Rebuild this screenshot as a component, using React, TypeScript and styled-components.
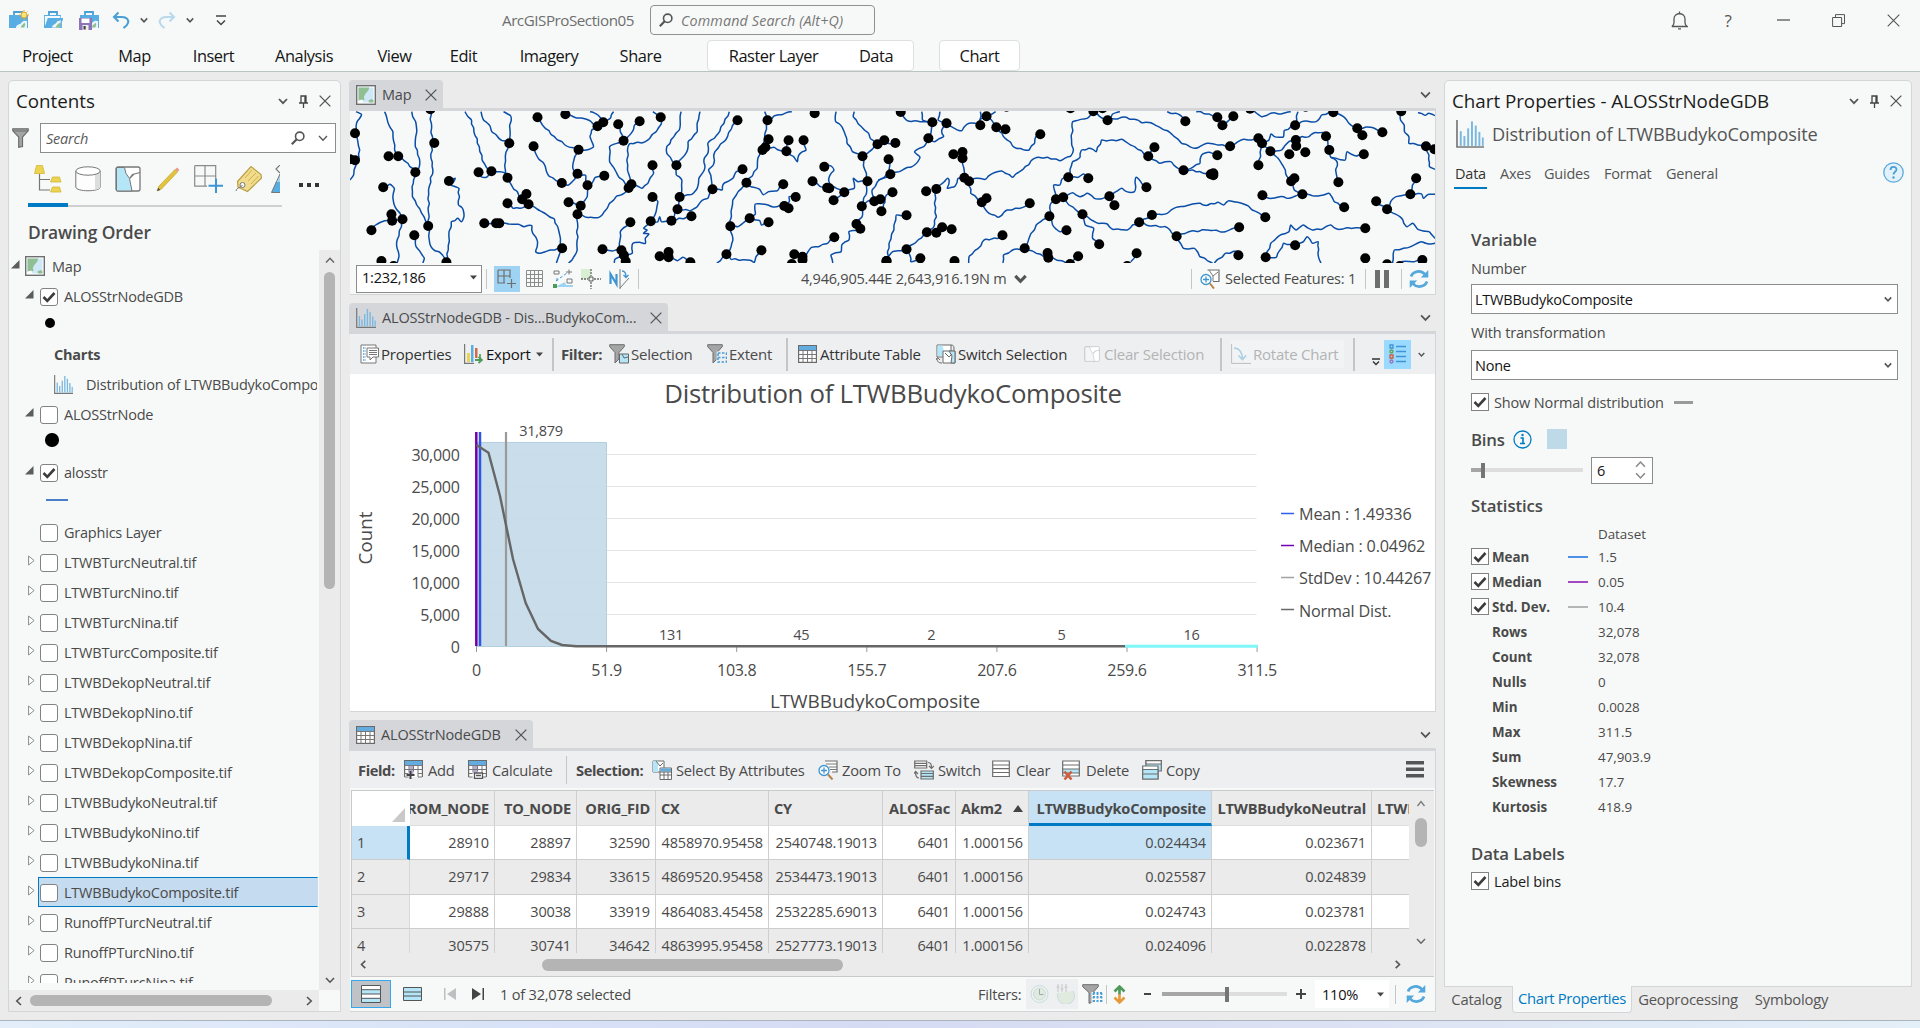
import React from "react";
import styled, { createGlobalStyle, css } from "styled-components";

const GlobalStyle = createGlobalStyle`
  * { box-sizing: border-box; }
  html, body { margin: 0; padding: 0; overflow: hidden; }
  body {
    font-family: "Open Sans", "Noto Sans", sans-serif;
    font-size: 14.5px;
    letter-spacing: -0.22px;
    color: #4a4a4a;
    background: #ebebeb;
  }
  svg { display: block; flex: none; }
`;

/* ---------- shell ---------- */

const Window = styled.div`
  width: 1920px;
  height: 1028px;
  display: flex;
  flex-direction: column;
  background: #ebebeb;
  overflow: hidden;
  white-space: nowrap;
`;

const Gap = styled.span<{ $w: number }>`
  width: ${(p) => p.$w}px;
  flex: none;
`;

const TitleBar = styled.header`
  height: 40px;
  display: flex;
  align-items: center;
  background: #f7f9f8;
`;

const QuickAccess = styled.div`
  display: flex;
  align-items: center;
  width: 502px;
  padding-left: 8px;
`;

const ProjectName = styled.div`
  width: 148px;
  font-size: 15.2px;
  color: #6e6e6e;
  letter-spacing: -0.47px;
`;

const CommandSearch = styled.div`
  width: 225px;
  height: 30px;
  display: flex;
  align-items: center;
  gap: 8px;
  padding-left: 8px;
  border: 1px solid #8e9190;
  border-radius: 4px;
  font-style: italic;
  font-size: 14.3px;
  color: #777;
  letter-spacing: 0.14px;
`;

const WindowButtons = styled.div`
  display: flex;
  align-items: center;
  margin-left: auto;
`;

const ButtonCell = styled.div<{ $w: number }>`
  width: ${(p) => p.$w}px;
  display: flex;
  justify-content: center;
  font-size: 17px;
  color: #555;
`;

const RibbonTabs = styled.nav`
  height: 32px;
  display: flex;
  background: #f7f9f8;
  border-bottom: 1px solid #b9c3bf;
`;

const RibbonTab = styled.div<{ $w: number }>`
  width: ${(p) => p.$w}px;
  height: 30px;
  display: flex;
  align-items: center;
  justify-content: center;
  padding-top: 1px;
  font-size: 16.4px;
  letter-spacing: -0.45px;
  color: #151515;
`;

const ContextGroup = styled.div<{ $gap: number }>`
  display: flex;
  margin-left: ${(p) => p.$gap}px;
  height: 31px;
  background: #fff;
  border: 1px solid #dedfe0;
  border-radius: 4px;
  ${RibbonTab} { height: 28px; }
`;

const Workspace = styled.main`
  flex: 1;
  min-height: 0;
  display: flex;
  align-items: flex-start;
  padding: 8px 8px 0;
`;

const TaskStrip = styled.footer`
  height: 8px;
  border-top: 1px solid #a9b4bd;
  background: linear-gradient(90deg, #e3eefa 0, #d9e3f8 25%, #d5dbf3 45%, #dbe0f3 65%, #dfe7f5 80%, #e3eff9 100%);
`;

const Panel = styled.section<{ $w: number; $h: number }>`
  width: ${(p) => p.$w}px;
  height: ${(p) => p.$h}px;
  display: flex;
  flex-direction: column;
  background: #f7f9f8;
  border: 1px solid #d3d5d9;
  border-radius: 5px 5px 0 0;
  overflow: hidden;
`;

const PanelHeader = styled.div`
  height: 42px;
  flex: none;
  display: flex;
  align-items: center;
  padding: 0 9px 2px 7px;
  font-size: 18.8px;
  letter-spacing: -0.02px;
  color: #1c1c1c;
`;

const PanelButtons = styled.div`
  margin-left: auto;
  display: flex;
  align-items: center;
  gap: 10px;
`;

/* ---------- contents ---------- */

const SearchRow = styled.div`
  display: flex;
  align-items: center;
  padding: 0 4px 0 3px;
  gap: 11px;
`;

const SearchBox = styled.div`
  flex: 1;
  height: 30px;
  display: flex;
  align-items: center;
  padding: 0 7px 0 5px;
  background: #fff;
  border: 1px solid #8c8c8c;
  font-style: italic;
  color: #5a5a5a;
  & > :first-child { flex: 1; }
`;

const ListModes = styled.div`
  display: flex;
  margin: 6px 0 0 19px;
  height: 48px;
`;

const ModeStrip = styled.div`
  width: 254px;
  display: flex;
  border-bottom: 2px solid #cfd0d0;
`;

const Mode = styled.div<{ $w: number; $active?: boolean }>`
  width: ${(p) => p.$w}px;
  height: 48px;
  flex: none;
  display: flex;
  align-items: center;
  justify-content: center;
  padding-bottom: 4px;
  border-bottom: 4px solid ${(p) => (p.$active ? "#007ac2" : "transparent")};
`;

const MoreDots = styled.div`
  display: flex;
  gap: 4px;
  align-items: center;
  margin-left: 17px;
  padding-top: 4px;
  i { width: 4px; height: 4px; background: #333; }
`;

const SectionTitle = styled.h2<{ $h: number; $pad?: number; $top?: number; $size?: number }>`
  margin: ${(p) => p.$top ?? 0}px 0 0;
  height: ${(p) => p.$h}px;
  flex: none;
  display: flex;
  align-items: center;
  padding-left: ${(p) => p.$pad ?? 0}px;
  font-size: ${(p) => p.$size ?? 16.8}px;
  font-weight: 600;
  letter-spacing: -0.1px;
`;

const TreeArea = styled.div`
  height: 740px;
  display: flex;
`;

const Tree = styled.div`
  width: 310px;
  height: 733px;
  overflow: hidden;
  padding-top: 1px;
`;

const TreeRow = styled.div<{ $h?: number; $pad: number; $top?: number }>`
  height: ${(p) => p.$h ?? 30}px;
  margin-top: ${(p) => p.$top ?? 0}px;
  padding-left: ${(p) => p.$pad}px;
  display: flex;
  align-items: center;
  overflow: hidden;
`;

const RowBody = styled.div<{ $selected?: boolean; $indent?: number }>`
  flex: 1;
  height: 30px;
  margin-right: 1px;
  display: flex;
  align-items: center;
  gap: 6px;
  padding-left: ${(p) => p.$indent ?? 1}px;
  border: 1px solid transparent;
  overflow: hidden;
  ${(p) => p.$selected && css`
    background: #c5dbef;
    border-color: #007ac2;
    border-right-color: #c5dbef;
  `}
`;

const Toggle = styled.div<{ $w: number }>`
  width: ${(p) => p.$w}px;
  display: flex;
  padding-bottom: 3px;
`;

const CheckBox = styled.span<{ $square?: boolean }>`
  width: 18px;
  height: 18px;
  flex: none;
  margin-top: 2px;
  display: flex;
  align-items: center;
  justify-content: center;
  background: #fff;
  border: 1px solid #828282;
  border-radius: ${(p) => (p.$square ? 0 : 3)}px;
`;

const Dot = styled.span<{ $size: number }>`
  width: ${(p) => p.$size}px;
  height: ${(p) => p.$size}px;
  border-radius: 50%;
  background: #000;
`;

const LineSample = styled.span<{ $color: string; $w: number; $h?: number }>`
  width: ${(p) => p.$w}px;
  height: ${(p) => p.$h ?? 2}px;
  flex: none;
  background: ${(p) => p.$color};
`;

const VScroll = styled.div<{ $w: number }>`
  width: ${(p) => p.$w}px;
  height: 100%;
  flex: none;
  display: flex;
  flex-direction: column;
  align-items: center;
  background: #ebebeb;
`;

const HScroll = styled.div<{ $w: number; $h: number; $pad?: string }>`
  width: ${(p) => p.$w}px;
  height: ${(p) => p.$h}px;
  display: flex;
  align-items: center;
  padding: ${(p) => p.$pad ?? "0"};
  background: #ebebeb;
`;

const Thumb = styled.span<{ $w: number; $h: number; $m?: string }>`
  width: ${(p) => p.$w}px;
  height: ${(p) => p.$h}px;
  margin: ${(p) => p.$m ?? "0"};
  flex: none;
  border-radius: 6px;
  background: #b4b4b4;
`;

const Spacer = styled.span`
  flex: 1;
`;

/* ---------- centre ---------- */

const Center = styled.div`
  width: 1087px;
  margin: 0 8px 0 8px;
  display: flex;
  flex-direction: column;
`;

const DocTabs = styled.div<{ $top?: number }>`
  height: 31px;
  margin-top: ${(p) => p.$top ?? 0}px;
  flex: none;
  display: flex;
  align-items: flex-start;
  border-bottom: 3px solid #d4d6da;
`;

const DocTab = styled.div<{ $w: number }>`
  width: ${(p) => p.$w}px;
  height: 28px;
  display: flex;
  align-items: center;
  padding: 1px 6px 0 7px;
  gap: 6px;
  background: #d4d6da;
  border-radius: 4px 4px 0 0;
  letter-spacing: -0.17px;
  & > :last-child { margin-left: auto; }
`;

const DocChevron = styled.div`
  margin-left: auto;
  padding: 9px 5px 0 0;
`;

const DocBody = styled.div<{ $h: number; $plain?: boolean }>`
  height: ${(p) => p.$h}px;
  flex: none;
  display: flex;
  flex-direction: column;
  margin-left: 1px;
  background: ${(p) => (p.$plain ? "#f7f9f8" : "#fff")};
  border-right: 1px solid #d3d5d9;
  border-bottom: 1px solid #d3d5d9;
  overflow: hidden;
`;

const Bar = styled.div<{ $h: number; $tone?: string; $size?: number; $left?: number }>`
  height: ${(p) => p.$h}px;
  flex: none;
  display: flex;
  align-items: center;
  padding-left: ${(p) => p.$left ?? 0}px;
  font-size: ${(p) => p.$size ?? 14.6}px;
  background: ${(p) => p.$tone ?? "#f7f9f8"};
`;

const Slot = styled.div<{ $w: number; $icon?: number; $bold?: boolean; $color?: string; $tint?: string; $h?: number }>`
  width: ${(p) => p.$w}px;
  height: ${(p) => p.$h ?? 28}px;
  flex: none;
  display: flex;
  align-items: center;
  font-weight: ${(p) => (p.$bold ? 700 : 400)};
  ${(p) => p.$bold && css`letter-spacing: -0.4px;`}
  color: ${(p) => p.$color ?? "inherit"};
  background: ${(p) => p.$tint ?? "transparent"};
  & > svg { margin-right: ${(p) => p.$icon ?? 0}px; }
`;

const Centered = styled(Slot)`
  justify-content: center;
  & > svg { margin-right: 0; }
`;

const Divider = styled.span<{ $l: number; $r: number; $h?: number; $w?: number }>`
  width: ${(p) => p.$w ?? 1}px;
  height: ${(p) => p.$h ?? 20}px;
  flex: none;
  margin: 0 ${(p) => p.$r}px 0 ${(p) => p.$l}px;
  background: #c3c5c7;
`;

const ScaleBox = styled.div`
  width: 126px;
  height: 28px;
  margin-left: 6px;
  display: flex;
  align-items: center;
  justify-content: space-between;
  padding: 0 4px 2px 5px;
  background: #fff;
  border: 1px solid #8c8c8c;
  color: #111;
`;

const TableFrame = styled.div`
  width: 1083px;
  height: 187px;
  margin: 2px 0 0 1px;
  display: flex;
  flex-direction: column;
  border: solid #c9c9c9;
  border-width: 1px 0 1px 1px;
  background: #ebebeb;
`;

const TableMain = styled.div`
  height: 162px;
  display: flex;
`;

const Grid = styled.div`
  width: 1057px;
  height: 162px;
  overflow: hidden;
`;

const GridRow = styled.div<{ $head?: boolean; $odd?: boolean }>`
  display: grid;
  grid-template-columns: 58px 85px 82px 79px 113px 114px 73px 73px 183px 160px 90px;
  height: ${(p) => (p.$head ? 35 : 34.3)}px;
  background: ${(p) => (p.$odd ? "#fff" : "#ebebeb")};
`;

const Cell = styled.div<{ $left?: boolean; $hot?: boolean; $head?: boolean }>`
  display: flex;
  align-items: center;
  justify-content: ${(p) => (p.$left ? "flex-start" : "flex-end")};
  overflow: hidden;
  padding: 0 5px 0 5px;
  border-right: 1px solid #cfcfcf;
  border-bottom: 1px solid #cdcdcd;
  letter-spacing: -0.14px;
  ${(p) => p.$head && css`
    font-weight: 700;
    font-size: 14.6px;
    letter-spacing: -0.2px;
    border-bottom-color: #dedede;
  `}
  ${(p) => p.$hot && css`background: #c7e2f5;`}
  ${(p) => p.$hot && p.$head && css`border-bottom: 3px solid #007ac2; padding-top: 2px;`}
`;

const RowHead = styled.div<{ $current?: boolean }>`
  display: flex;
  align-items: center;
  padding-left: 5px;
  border-bottom: 1px solid #cdcdcd;
  border-right: ${(p) => (p.$current ? "3px solid #007ac2" : "1px solid #d8d8d8")};
  background: ${(p) => (p.$current ? "#c7e2f5" : "#ebebeb")};
`;

const Corner = styled.div`
  display: flex;
  align-items: flex-end;
  justify-content: flex-end;
  padding: 0 5px 4px;
  background: #fff;
`;

const ViewToggle = styled.div`
  width: 40px;
  height: 28px;
  display: flex;
  align-items: center;
  justify-content: center;
  background: #bfc2c7;
  border: 1px solid #35a7ea;
`;

const Track = styled.div<{ $w: number; $pos: number }>`
  width: ${(p) => p.$w}px;
  height: 15px;
  flex: none;
  display: flex;
  align-items: center;
  & > :first-child { width: ${(p) => p.$pos}px; height: 4px; background: #a6a6a6; }
  & > :nth-child(2) { width: 4px; height: 15px; background: #757575; }
  & > :last-child { flex: 1; height: 4px; background: #dedede; }
`;

/* ---------- chart properties ---------- */

const RightColumn = styled.div`
  width: 468px;
  display: flex;
  flex-direction: column;
`;

const ChartName = styled.div`
  height: 32px;
  display: flex;
  align-items: center;
  padding-left: 11px;
  margin-top: -5px;
  gap: 8px;
  font-size: 18.2px;
  letter-spacing: -0.12px;
  color: #555;
`;

const PropTabs = styled.div`
  height: 40px;
  margin-top: 8px;
  display: flex;
  align-items: flex-start;
  padding: 4px 7px 0 9px;
  & > svg { margin-left: auto; }
`;

const PropTab = styled.div<{ $w: number; $active?: boolean }>`
  width: ${(p) => p.$w}px;
  height: 28px;
  span {
    display: inline-block;
    height: 27px;
    padding: 2px 1px 0;
    color: ${(p) => (p.$active ? "#333" : "#555")};
    border-bottom: ${(p) => (p.$active ? "2px solid #007ac2" : "none")};
  }
`;

const Form = styled.div`
  padding: 0 13px 0 26px;
  margin-top: 28px;
  display: flex;
  flex-direction: column;
`;

const FieldLabel = styled.label<{ $h: number }>`
  height: ${(p) => p.$h}px;
  display: flex;
  align-items: center;
  letter-spacing: -0.15px;
`;

const Select = styled.div`
  height: 30px;
  display: flex;
  align-items: center;
  justify-content: space-between;
  padding: 0 5px 0 3px;
  background: #fff;
  border: 1px solid #8c8c8c;
  color: #151515;
`;

const CheckRow = styled.div<{ $h: number; $dark?: boolean }>`
  height: ${(p) => p.$h}px;
  display: flex;
  align-items: center;
  gap: 5px;
  color: ${(p) => (p.$dark ? "#1a1a1a" : "inherit")};
  letter-spacing: -0.15px;
  ${CheckBox} { margin-top: 0; }
`;

const BinsRow = styled.div`
  height: 30px;
  display: flex;
  align-items: center;
  font-size: 16.8px;
  font-weight: 600;
  span { width: 42px; }
`;

const Swatch = styled.i`
  width: 20px;
  height: 20px;
  margin-left: 15px;
  background: #bed9e8;
`;

const SliderRow = styled.div`
  height: 32px;
  display: flex;
  align-items: center;
  gap: 8px;
`;

const Spinner = styled.div`
  width: 62px;
  height: 27px;
  display: flex;
  align-items: center;
  justify-content: space-between;
  padding: 0 6px 0 5px;
  background: #fff;
  border: 1px solid #8c8c8c;
  color: #151515;
`;

const StatRow = styled.div<{ $h?: number }>`
  height: ${(p) => p.$h ?? 25}px;
  display: grid;
  grid-template-columns: 21px 76px 30px 1fr;
  align-items: center;
  font-size: 13.4px;
  letter-spacing: -0.02px;
  ${CheckBox} { margin-top: 0; height: 17px; }
  b { font-weight: 700; }
`;

const BottomTabs = styled.div`
  height: 26px;
  display: flex;
  align-items: stretch;
`;

const BottomTab = styled.div<{ $w: number; $active?: boolean }>`
  width: ${(p) => p.$w}px;
  display: flex;
  justify-content: center;
  align-items: center;
  padding: 0 3px 2px 0;
  font-size: 14.8px;
  letter-spacing: -0.2px;
  color: #555;
  ${(p) => p.$active && css`
    color: #007ac2;
    letter-spacing: -0.35px;
    padding-right: 0;
    background: #f7f9f8;
    border: 1px solid #d3d5d9;
    border-top: none;
    border-radius: 0 0 4px 4px;
    margin-top: -1px;
  `}
`;

/* ---------- icons ---------- */

const Chevron = ({ s = 9, w = 1.8, c = "#555", dir = 0 }: { s?: number; w?: number; c?: string; dir?: number }) => (
  <svg width={s} height={s} viewBox="0 0 10 10" fill="none" stroke={c} strokeWidth={w}>
    <path d="M1 3l4 4.2L9 3" transform={`rotate(${dir} 5 5)`} />
  </svg>
);

const Close = ({ s = 13, w = 1.4, c = "#555" }: { s?: number; w?: number; c?: string }) => (
  <svg width={s} height={s} viewBox="0 0 13 13" stroke={c} strokeWidth={w}><path d="M.7.7l11.6 11.6M12.3.7L.7 12.3" /></svg>
);

const Pin = () => (
  <svg width="11" height="13" viewBox="0 0 11 13" fill="none" stroke="#444" strokeWidth="1.3">
    <path d="M3 8V1h5v7M1 8h9M5.500 8v5M7 1v7" />
  </svg>
);

const Caret = () => (
  <svg width="7" height="5" viewBox="0 0 7 5"><path d="M0 .5h7L3.500 4.500z" fill="#444" /></svg>
);

const Magnifier = ({ s = 14 }: { s?: number }) => (
  <svg width={s} height={s} viewBox="0 0 14 14" fill="none" stroke="#555">
    <circle cx="8.700" cy="5.300" r="4.200" strokeWidth="1.600" /><path d="M5.700 8.300L.8 13.200" strokeWidth="2.200" />
  </svg>
);

const Check = () => (
  <svg width="14" height="12" viewBox="0 0 14 12" fill="none" stroke="#3c3c3c" strokeWidth="2.600"><path d="M1.500 6l3.800 3.800L12.500 2" /></svg>
);

const MapIcon = ({ s = 19 }: { s?: number }) => (
  <svg width={s} height={s} viewBox="0 0 20 20">
    <rect x=".7" y=".7" width="18.600" height="18.600" fill="#fff" stroke="#6f6f6f" strokeWidth="1.400" />
    <path d="M2.500 2.500h15v15h-15z" fill="#cfe8f7" />
    <path d="M2.500 2.500h10.800l-1 3-3 3.500-1.500 3 .8 2.500-3 2-3.100-.8z" fill="#8fbf93" />
    <path d="M2.500 15.500l4-1 1 3h-5z" fill="#fff" /><path d="M12.500 15.500l3-1.500 2 1.200v2.300h-4.500z" fill="#8fbf93" />
  </svg>
);

const Histogram = ({ s = 20 }: { s?: number }) => (
  <svg width={s} height={s} viewBox="0 0 20 20">
    <path d="M.7 0v19.300H20" fill="none" stroke="#777" strokeWidth="1.200" />
    <g fill="#7ab8e0">
      <rect x="2.700" y="8" width="1.400" height="10.500" /><rect x="5.300" y="11.500" width="1.400" height="7" />
      <rect x="8" y="6" width="1.400" height="12.500" /><rect x="10.700" y="1" width="1.400" height="17.500" />
      <rect x="13.400" y="4" width="1.400" height="14.500" /><rect x="16" y="8.500" width="1.400" height="10" />
      <rect x="18.500" y="12.500" width="1.300" height="6" />
    </g>
  </svg>
);

const Funnel = ({ w = 17, h = 20 }: { w?: number; h?: number }) => (
  <svg width={w} height={h} viewBox="0 0 17 20">
    <path d="M.8.8h15.400v2L10.500 9v9.500L6.700 19.200V9L.8 2.800z" fill="#a5a5a5" stroke="#6c6c6c" strokeWidth="1.200" />
    <path d="M1 3h15" stroke="#6c6c6c" strokeWidth="1" />
  </svg>
);

const TableIcon = ({ head = "#62ace0", w = 19 }: { head?: string; w?: number }) => (
  <svg width={w} height="18" viewBox="0 0 19 18">
    <rect x=".6" y=".6" width="17.800" height="16.800" fill="#fff" stroke="#6a6a6a" strokeWidth="1.200" />
    <path d="M1 1h17v4H1z" fill={head} />
    <path d="M.6 5.500h17.800M.6 9.500h17.800M.6 13.500h17.800M5 5.500v12M9.500 5.500v12M14 5.500v12" stroke="#777" strokeWidth="1" />
  </svg>
);

const FieldIcon = ({ plus }: { plus?: boolean }) => (
  <svg width="19" height="19" viewBox="0 0 19 19">
    <path d="M.6 17V.6h17.800v16.400" fill="#fff" stroke="#6a6a6a" strokeWidth="1.200" />
    <path d="M1 1h17v4H1z" fill="#62ace0" /><path d="M5.500 6h4v8h-4z" fill="#b9a9d8" />
    <path d="M.6 5.500h17.800M.6 9.500h17.800M.6 13.500h4M14 13.500h4M.6 17h4M14 17h4M5 5.500v7M9.500 5.500v6M14 5.500v11.500" stroke="#777" />
    {plus ? <path d="M6.500 11v8M2.500 15h8" stroke="#444" strokeWidth="2" /> : <path d="M6.500 13h8v5.500h-8zM8 15.500h5" stroke="#555" fill="#fff" strokeWidth="1.300" />}
  </svg>
);

const Refresh = ({ s = 20 }: { s?: number }) => (
  <svg width={s} height={s} viewBox="0 0 20 20" fill="none" stroke="#55a8dc" strokeWidth="2.700">
    <path d="M2 7.500C4 2 12 .5 16 5.500M18 12.500C16 18 8 19.500 4 14.500" />
    <path d="M19.300 1v7.500h-7.500zM.7 19v-7.500h7.500z" fill="#55a8dc" stroke="none" />
  </svg>
);

const ProjectIcon = ({ kind }: { kind: "new" | "open" | "save" }) => (
  <svg width="22" height="20" viewBox="0 0 22 20">
    <path d="M6 5V2h8v3" fill="none" stroke="#4a9fd6" strokeWidth="1.800" />
    <path d={kind === "open" ? "M1 5h17v3l2 1-3 9H1z" : "M1 5h19v13H1z"} fill="#58aee2" />
    {kind === "open" && <path d="M1.800 6h15.500v2H5L2 16.500z" fill="#f2fafd" />}
    {kind === "open" && <path d="M5 8h15l-3 10H1.500z" fill="#58aee2" />}
    <path d="M8 18c1-5 4-2 6-6 2-2 4-1 5-1v7z" fill={kind === "open" ? "#6db6e4" : "#e9f5fb"} />
    <path d={kind === "open" ? "M9 17.500c1-4 4-3 5-6 1.500-1 3-1 4-1l-2 7z" : "M8 18c1-5 4-2 6-6h1l-3 6z"} fill="#e9f5fb" />
    <path d="M13 17.500c0-3 2.500-3 3.500-5l.8 2-1 3z" fill="#8fc08a" />
    {kind === "new" && <g><circle cx="16" cy="5" r="3" fill="#f9e27a" stroke="#e0a92a" /><path d="M16 0v1.500M16 8.500V10M11 5h1.500M19.500 5H21M12.500 1.500l1 1M19.500 1.500l-1 1M12.500 8.500l1-1M19.500 8.500l-1-1" stroke="#e0a92a" /></g>}
    {kind === "save" && <g><path d="M0 8h13v12H0z" fill="#8b74b8" /><path d="M2.500 8.500h8V13h-8z" fill="#fff" /><path d="M3.500 15h6v5h-6z" fill="#eee" /><path d="M4.500 16h2.200v3.500H4.500z" fill="#444" /></g>}
  </svg>
);

const Undo = ({ flip }: { flip?: boolean }) => (
  <svg width="18" height="18" viewBox="0 0 18 18" fill="none" stroke={flip ? "#b9d9ec" : "#4a9fd6"} strokeWidth="2.100">
    <g transform={flip ? "matrix(-1 0 0 1 18 0)" : undefined}>
      <path d="M6.500 1.500L2 6l4.500 4.500M2.500 6H10c5 0 7 3 6 6-.7 2.200-2 3.500-4.500 5" />
    </g>
  </svg>
);

const DrawingOrderIcon = () => (
  <svg width="28" height="28" viewBox="0 0 28 28">
    <g fill="#ecd352" stroke="#d3b836" strokeWidth=".8"><path d="M2.500 .5h6l2 8H.5zM18.500 12h7l1.500 5H16.500zM18.500 22h7l1.500 5H16.500z" /></g>
    <path d="M5.500 9v16h10.500M5.500 14.500h10.500" fill="none" stroke="#777" strokeWidth="1.200" />
  </svg>
);
const SourceIcon = () => (
  <svg width="26" height="26" viewBox="0 0 26 26">
    <path d="M.8 5v16c0 5 24.400 5 24.400 0V5" fill="#fdfdfd" stroke="#777" />
    <path d="M20 8.500c3-.7 5-2 5.200-3.500v16c0 1.500-3 2.500-5.200 3z" fill="#ddd" />
    <ellipse cx="13" cy="5" rx="12.200" ry="4.200" fill="#fff" stroke="#777" />
  </svg>
);
const SelectionIcon = ({ s = 26, fill = "#b5e6f7", c = "#777" }: { s?: number; fill?: string; c?: string }) => (
  <svg width={s} height={s} viewBox="0 0 26 26">
    <rect x="1" y="1" width="24" height="24" rx="2" fill="#fff" stroke={c} strokeWidth="1.300" />
    <path d="M1.500 1.500h8l1.500 6 3.500 5 2.500 12.500H1.500z" fill={fill} stroke={c} />
    <path d="M14.500 12.500l3-4 7.500-2M14.500 12.500l4-4" fill="none" stroke={c} strokeWidth="1.200" />
  </svg>
);
const PencilIcon = () => (
  <svg width="24" height="25" viewBox="0 0 24 25">
    <path d="M1 24l2-5L19 2.500l2.500 2.500L5.500 22z" fill="#e2c33e" stroke="#c4a52f" strokeWidth=".7" />
    <path d="M19 2.500l2-2 2.500 2.500-2 2z" fill="#ec9a85" /><path d="M1 24l1.200-3.300 2.200 2.200z" fill="#555" />
  </svg>
);
const SnapIcon = () => (
  <svg width="29" height="28" viewBox="0 0 29 28" fill="none">
    <path d="M.7.7h21v13M.7.7v20.500H13M11 .7v20.500M.7 11h21" stroke="#8a8a8a" strokeWidth="1.200" />
    <path d="M22 13.500V28M14.500 20.800H29" stroke="#3f95d2" strokeWidth="2" />
  </svg>
);
const TagIcon = () => (
  <svg width="28" height="28" viewBox="0 0 28 28">
    <path d="M2.500 16.500L16 1.500l10 8L26.500 13 12.500 26.500 3 22z" fill="#f0dc8c" stroke="#b99f45" strokeWidth="1.200" />
    <path d="M10 13l7-8M13 16l8-8M16 19l7.500-8" stroke="#d0b04a" /><circle cx="7.500" cy="20" r="2.500" fill="#fff" stroke="#777" />
    <path d="M7.500 20c-2 3-5.500 2-6.500 6" fill="none" stroke="#777" />
  </svg>
);
const PerspectiveIcon = () => (
  <svg width="9" height="28" viewBox="0 0 9 28" fill="none">
    <path d="M9 0L5 4l4 4" stroke="#777" strokeWidth="1.200" /><path d="M9 8L6 17h3z" fill="#9fd6ec" /><path d="M5 17h4v10.500H.5z" fill="#58aee2" />
    <path d="M9 9L.5 27.500H9" stroke="#777" />
  </svg>
);

const RowsIcon = ({ kind }: { kind: "switch" | "clear" | "delete" | "copy" }) => (
  <svg width={kind === "clear" || kind === "delete" ? 18 : 20} height="20" viewBox={kind === "clear" || kind === "delete" ? "0 0 18 20" : "0 0 20 20"} fill="#fff" stroke="#6d6d6d" strokeWidth="1.200">
    {kind === "clear" && <path d="M.7 1h16.600v15.500H.7zM.7 5h16.600M.7 8.700h16.600M.7 12.500h16.600" />}
    {kind === "delete" && <g><path d="M.7 1h16.600v15H.7zM.7 5h16.600" /><path d="M.7 9h16.600v4H.7z" fill="#b5e6f7" /><path d="M2.500 11.500l7 8M9.500 11.500l-7 8" stroke="#cf5a3c" strokeWidth="2.500" /></g>}
    {kind === "switch" && <g><path d="M.7 1h12v7H.7zM.7 3.400h12M.7 5.700h12" /><path d="M7 11h12.300v8H7zM7 13.500h12.300M7 16.300h12.300" fill="#b5e6f7" /><path d="M14 2.500c3 0 3.500 2 3.500 5M15 6l2.500 2.500L20 6M5 18c-3 0-3.500-2-3.500-6M-.5 14l2.200-2.500L4 14" fill="none" /></g>}
    {kind === "copy" && <g><path d="M4 .7h15.300V11H4z" fill="#b5e6f7" /><path d="M4 .7h15.300V4H4z" /><path d="M.7 6h15.300v13H.7z" /><path d="M.7 9.500h15.300v9.500H.7zM.7 14h15.300" fill="#b5e6f7" /></g>}
  </svg>
);

const ZoomSelected = () => (
  <svg width="20" height="20" viewBox="0 0 20 20" fill="none">
    <path d="M7 1h12v11h-5" fill="#fff" stroke="#6d6d6d" strokeWidth="1.200" /><path d="M8 4h11M11 7h8M12 9.500h7" stroke="#777" />
    <circle cx="6" cy="10.500" r="5" fill="#fff" stroke="#3f95d2" strokeWidth="1.300" /><path d="M3 10.500h6M6 7.500v6" stroke="#3f95d2" strokeWidth="1.300" />
    <path d="M10 14.500l4.500 5" stroke="#b5824a" strokeWidth="2" />
  </svg>
);

const ZoomFeatures = () => (
  <svg width="20" height="20" viewBox="0 0 20 20" fill="none">
    <path d="M7.500 1H19v11.500h-6" fill="#fff" stroke="#6d6d6d" strokeWidth="1.200" /><path d="M9 1l4 6 5-4M13 7v5" stroke="#777" />
    <circle cx="6" cy="10.500" r="5" fill="#fff" stroke="#3f95d2" strokeWidth="1.300" /><path d="M3 10.500h6M6 7.500v6" stroke="#3f95d2" strokeWidth="1.300" />
    <path d="M10 14.500l4 5" stroke="#b5824a" strokeWidth="2" />
  </svg>
);

/* ---------- map ---------- */

type Pt = [number, number];
const parse = (s: string): Pt[] => s.trim().split(/\s+/).map((p) => p.split(",").map(Number) as Pt);

/* Streams meander a little between the surveyed vertices. */
const meander = (pts: Pt[]): Pt[] => {
  const out: Pt[] = [pts[0]];
  for (let i = 1; i < pts.length; i++) {
    const [x0, y0] = pts[i - 1], [x1, y1] = pts[i];
    const len = Math.hypot(x1 - x0, y1 - y0);
    const n = Math.max(1, Math.round(len / 4.5));
    for (let k = 1; k < n; k++) {
      const t = k / n;
      const a = Math.sin((x0 + x1 * 3 + y0 * 5 + k * 2.3) * 1.7) * 0.7;
      out.push([x0 + (x1 - x0) * t - ((y1 - y0) / len) * a, y0 + (y1 - y0) * t + ((x1 - x0) / len) * a]);
    }
    out.push([x1, y1]);
  }
  return out;
};

const smooth = (pts: Pt[]) => {
  let d = `M${pts[0][0]} ${pts[0][1]}`;
  for (let i = 0; i < pts.length - 1; i++) {
    const a = pts[i - 1] ?? pts[i], b = pts[i], c = pts[i + 1], e = pts[i + 2] ?? c;
    d += `C${b[0] + (c[0] - a[0]) / 7} ${b[1] + (c[1] - a[1]) / 7} ${c[0] - (e[0] - b[0]) / 7} ${c[1] - (e[1] - b[1]) / 7} ${c[0]} ${c[1]}`;
  }
  return d;
};

const westStreams = `45,125 60,133 55,145 48,155 46,180 50,215 55,240 53,265 45,285 38,315 28,330
125,125 135,160 148,185 153,240 160,255 190,280 211,307
201,125 214,170 211,230 222,265 222,290 211,307 206,330 202,350 203,380 215,405 235,440 247,468
253,120 258,215 255,265 260,300 248,360 248,468 250,510 258,535 285,553 298,577 303,540 305,500 312,455 330,445 340,455 347,440 345,420 332,405 333,355 310,345 322,325 305,333
20,271 42,271
121,352 140,343 152,355 148,380 152,405 168,430 175,448 172,470 160,510 160,535 165,560 160,579
144,433 146,452 175,448
88,481 100,465 125,452 146,452
208,496 213,530 230,555 236,565 232,579
350,125 368,150 375,185 390,230 398,270 412,295 424,304
388,307 395,320 410,322 424,304 445,305 460,308 469,323
395,125 402,150 420,168 425,185 445,205 474,220
458,125 478,138 476,180 474,220 463,260 463,300 469,323 480,345 510,388 528,403 565,425 600,447 612,480 621,535 612,560 606,579
522,372 510,388
469,400 485,415 505,415 528,403
404,460 446,460 500,463 515,470 537,467 540,490 553,515 548,545 560,550 590,540 622,535
553,142 575,175 600,200 630,225 668,239
631,133 660,143 690,148 721,169
700,125 722,135 737,157
766,125 757,145 737,157
721,169 705,180 700,200 710,230 690,240 668,239
668,239 655,270 652,295 665,311 655,330 640,345 621,339
542,229 550,255 575,290 585,318 605,332 621,339
665,311 688,316 688,335 693,346
740,317 715,322 705,340 693,346 692,380 674,407 665,433
640,397 655,400 674,407
665,433 664,540 655,560 640,579
665,433 690,442 725,442 740,425 755,400 775,378 795,370 808,354
779,163 785,185 794,212
839,154 825,165 815,190 794,212 755,230 755,275 775,310 808,354
876,125 890,135 898,142 900,160 885,185 855,215 810,222 805,240 805,300 816,343
816,343 845,355 862,340 868,325 878,310 875,286
955,125 950,180 935,200 915,230 915,250 942,286 942,315 957,330 957,360 951,381
1008,125 1000,160 1000,185 975,215 973,240 960,262 942,286
1090,125 1075,160 1055,195 1030,220 1030,250 1020,265 1020,300 1005,325 1000,355 985,373 951,381
1113,151 1100,165 1085,200 1050,245 1045,285 1032,300 1040,330 1043,358
1043,358 1070,360 1075,340 1100,325 1110,305 1127,298
1043,358 1030,385 1010,395 1000,410 980,422 945,418
875,381 890,395 885,425 870,454 890,455 895,440 900,455 928,452 984,439
951,381 945,418 928,452
870,454 850,475 860,480 850,490 865,492 855,505 855,520 838,517 820,520 818,550 800,556
813,457 785,485 783,535 788,541
735,538 750,541 788,541
795,556 770,568 768,579
895,559 920,562 945,572 960,562 981,577
1189,125 1197,151 1225,135 1265,125
1197,151 1190,190 1183,240 1170,265 1168,295 1138,338 1115,365 1100,390 1095,425 1093,469 1100,510 1095,530 1082,553 1055,579
1200,208 1191,232 1215,232 1235,242 1250,244 1270,260 1280,275 1285,255 1305,240 1300,225 1298,211
1256,211 1250,244
1138,338 1150,350 1175,358 1185,374 1200,365 1225,362 1241,343
1276,381 1258,380 1258,395 1244,408 1210,410 1180,402 1163,402 1163,432 1147,445
1093,469 1115,470 1130,458 1147,445 1175,452 1180,465 1200,457
1082,553 1095,568 1140,570 1160,577 1165,560 1180,541
1384,502 1365,520 1340,530 1320,532 1305,555 1295,560
1389,125 1388,155 1405,170 1415,195 1420,220 1435,245 1463,259
1440,125 1437,140 1460,170 1480,190 1485,205 1505,223
1463,259 1490,238 1505,223 1555,219
1463,259 1470,300 1477,334 1475,360 1461,409 1462,440 1446,462
1457,476 1425,485 1425,510 1405,525 1403,545 1375,555 1380,579
1356,290 1375,288 1383,300 1370,320 1370,355
1323,334 1345,350 1364,353
1370,355 1382,350 1412,367 1382,391
1412,367 1440,355 1437,325 1450,335 1477,334
1541,313 1505,335 1490,360 1496,394
1541,313 1536,268
1547,367 1530,375 1525,400 1513,388
1516,424 1522,400
1461,409 1480,392 1496,394`;

const westNodes = "253,118 42,190 42,271 28,268 264,219 136,259 163,259 211,307 305,333 121,352 144,433 146,452 175,448 88,481 208,496 247,468 116,573 298,577 150,588 474,220 388,307 424,304 469,323 522,372 510,388 528,403 469,400 404,460 437,460 446,460 622,535 553,142 631,133 542,229 668,239 665,311 740,317 693,346 621,339 640,397 674,407 665,433 737,157 721,169 779,163 839,154 898,142 794,212 942,286 875,286 816,343 808,354 875,381 951,381 945,418 928,452 984,439 870,454 813,457 735,538 788,541 795,556 800,574 895,559 920,546 920,562 981,577 1113,151 1127,298 1043,358 1197,151 1200,208 1256,211 1298,211 1191,232 1183,240 1250,244 1138,338 1241,343 1276,381 1244,408 1256,415 1147,445 1200,457 1093,469 1082,553 1180,541 1272,553 1295,560 1295,570 1265,582 1329,130 1356,290 1323,334 1364,353 1370,355 1412,367 1382,391 1463,259 1477,334 1461,409 1446,462 1457,476 1384,502 1505,223 1524,211 1555,219 1536,268 1541,313 1547,367 1496,394 1513,388 1516,424 1530,573";

const eastStreams = `57,126 75,152 110,155 144,157
115,125 117,150 144,157 140,190 133,205
165,125 160,150 183,160
183,160 170,180 175,200 150,215 133,205 120,230 95,245 110,262 95,285 65,298 28,313 -5,330
183,160 205,175 225,182 232,170 245,160 262,160 276,166 275,150 293,139
293,139 310,155 320,172 345,178
320,172 340,200 375,235 410,240 425,220 430,198 441,193
276,125 276,166
318,125 293,139
227,265 233,323
155,357 165,345 185,325 190,330 185,355 205,350 215,325 232,323
155,357 150,400 155,440 145,475 129,487
129,487 105,510 73,538 35,545 18,573
73,436 45,435 38,480 25,520 20,573
73,538 85,565 85,575 111,565
245,334 250,370 280,397 295,425 325,442 350,420 385,415 412,400
245,334 265,325 290,328 310,310 335,303 365,322 400,290 425,265 460,262 495,272 525,258 532,240 527,210 530,155 570,145 587,124
244,579 245,560 270,535 290,508 325,505 337,496
338,579 340,555 365,540 398,535 410,505 430,465 450,448 466,439 470,400 484,388
398,535 430,550 463,563 500,572 523,580 545,559
466,439 475,465 495,485 513,481
484,388 478,345 495,345 500,328 518,322
518,322 545,322 560,312 573,325
518,322 530,275 550,262 555,240 575,235 595,245 610,210 650,212 665,208 700,230 738,259 770,280 800,275 820,295 835,301
755,232 738,259
504,382 530,368 550,380 570,370 590,385 610,386 631,379 665,355 685,367 700,365 705,322 733,352
631,379 645,406
504,382 520,405 557,433 600,460 625,462 640,478 680,480 695,465 713,457 748,435
748,435 790,430 815,412 850,405 880,400 900,406 930,397 945,405 960,392 1000,402 1035,425 1060,442
557,433 565,465 588,475 585,505 603,523
713,457 745,468 785,470 816,499 850,485 900,480 950,485 965,478 988,472
816,499 835,535 865,535 880,560 915,579
920,579 950,550 986,544
706,550 690,575
626,151 665,142 700,148 720,158 745,158 770,172 800,190 830,220 865,235 900,220 930,225 963,229 985,215 1000,208 1015,210 1041,205
587,124 605,140 626,151 640,132 660,125
790,125 825,135 840,154
870,125 905,132 928,142
972,139 942,166
835,301 860,292 880,280 885,255 905,247 928,256
835,301 860,300 890,310 910,313
1018,118 1050,140 1075,130 1110,130 1130,125
1041,205 1051,220 1070,210 1076,192 1085,200 1110,200 1112,182 1142,166 1160,155 1200,155 1215,135 1247,127 1275,140 1290,160 1313,175 1350,172 1382,187
1150,125 1142,166
1051,220 1041,286
1051,220 1074,244 1105,240 1125,215 1144,210 1160,200 1180,200 1195,188 1220,188 1227,199 1236,240 1240,262 1257,275 1255,310 1261,337
1240,262 1280,270 1285,245 1310,258 1331,253
1074,244 1095,265 1115,300 1120,320 1131,334 1140,360 1162,373
1052,376 1070,385 1100,380 1120,385 1162,373 1205,378 1235,370 1250,395 1277,412
1434,124 1432,150 1442,165 1443,185 1455,200 1455,220 1480,225 1502,229
1502,229 1510,255 1512,290 1527,298
1480,128 1500,136 1510,130 1527,137
1475,325 1465,345 1459,373 1420,380 1405,395 1395,418 1430,440 1450,470 1465,460 1480,478 1510,485 1527,505
1365,394 1395,418
1459,373 1490,372 1495,385 1510,373 1527,373
1061,562 1075,520 1095,500 1125,485 1130,465 1145,480 1165,465 1190,480 1215,478 1240,465 1260,478 1285,473 1335,475
1061,562 1090,562 1110,520 1142,526 1165,515 1175,500 1190,520 1205,515 1205,550 1213,579
1410,579 1415,540 1440,535 1460,530 1490,515 1510,522 1527,520
1435,575 1470,575 1492,570`;

const eastNodes = "57,126 144,157 183,160 133,205 293,139 276,166 320,172 345,178 441,193 202,253 227,246 227,265 232,323 245,334 155,357 127,364 280,397 293,385 412,400 73,436 129,487 155,488 171,472 197,478 73,538 111,565 18,573 205,573 337,496 398,535 461,549 463,563 545,559 523,582 466,439 513,481 484,388 504,382 518,322 573,325 557,433 603,523 631,379 645,406 733,352 713,457 748,435 816,499 988,472 986,556 706,550 680,588 1060,442 587,124 612,115 626,151 840,154 928,142 942,166 972,139 755,232 738,259 835,301 928,256 910,313 917,310 917,316 963,229 1041,205 1051,220 1074,244 1041,286 1142,166 1144,210 1145,228 1126,253 1170,247 1227,199 1236,240 1331,253 1261,337 1140,325 1131,334 1162,373 1052,376 1277,412 1247,127 1313,175 1327,196 1382,187 1434,124 1502,229 1525,238 1475,325 1459,373 1365,394 1395,418 1335,475 1142,526 1061,562 1335,565 1395,583 1430,588 1492,570 348,110 524,115 1018,116 1171,110";

const place = (s: string, ox: number, kx: number): Pt[] => parse(s).map(([x, y]) => [ox + x / kx, y / 3 - 41]);

const streams = [
  ...westStreams.split("\n").map((l) => place(l, -10, 2.8)),
  ...eastStreams.split("\n").map((l) => place(l, 530, 2.751)),
];
const nodes = [...place(westNodes, -10, 2.8), ...place(eastNodes, 530, 2.751)];

const StreamMap = () => (
  <svg width="1085" height="152" viewBox="0 0 1085 152">
    <g fill="none" stroke="#0b4ea8" strokeWidth="1.500" strokeLinejoin="round">
      {streams.map((s, i) => <path key={i} d={smooth(meander(s))} />)}
    </g>
    {nodes.map(([x, y], i) => <circle key={i} cx={x} cy={y} r="5" />)}
  </svg>
);

/* ---------- chart ---------- */

const AxisText = styled.text<{ $size?: number; $ls?: number }>`
  font-size: ${(p) => p.$size ?? 16}px;
  letter-spacing: ${(p) => p.$ls ?? -0.3}px;
  fill: #4a4a4a;
`;

const yTicks = ["30,000", "25,000", "20,000", "15,000", "10,000", "5,000", "0"];
const xTicks = ["0", "51.9", "103.8", "155.7", "207.6", "259.6", "311.5"];
const binLabels = ["31,879", "131", "45", "2", "5", "16"];
const legend = [["Mean : 1.49336", "#2f5fe8"], ["Median : 0.04962", "#7400b0"], ["StdDev : 10.44267", "#a3a3a3"], ["Normal Dist.", "#6b6b6b"]];
const STEP = 130.1;

const DistributionChart = () => (
  <svg width="1085" height="338" viewBox="350 374 1085 338">
    <AxisText x="893" y="402.500" textAnchor="middle" $size={25.800} $ls={-0.300}>Distribution of LTWBBudykoComposite</AxisText>
    {yTicks.map((t, i) => (
      <g key={t}>
        {i < 6 && <path d={`M476 ${454.500 + i * 32}H1256.500`} stroke="#e4e4e4" />}
        <AxisText x="459.500" y={460.500 + i * 32} textAnchor="end">{t}</AxisText>
      </g>
    ))}
    <path d="M476 442.500h130.500v204H476z" fill="#c3d9e8" fillOpacity=".9" stroke="#b3d0e2" />
    {xTicks.map((t, i) => (
      <g key={t}>
        <path d={`M${476.500 + i * STEP} 646v6`} stroke="#999" />
        <AxisText x={476.500 + i * STEP} y="676" textAnchor="middle">{t}</AxisText>
      </g>
    ))}
    {binLabels.map((t, i) => (
      <AxisText key={t} x={541 + i * STEP} y={i === 0 ? 435.500 : 639.500} textAnchor="middle" $size={14.500}>{t}</AxisText>
    ))}
    <path d="M476.300 432v214" stroke="#7400a8" strokeWidth="2.500" />
    <path d="M480 432v214" stroke="#2f55e8" strokeWidth="2.500" />
    <path d="M506 432v214" stroke="#9a9a9a" strokeWidth="2.200" />
    <path d="M476.500 445L488.500 452.700 500 496 513 559 525.700 603 538 629 551 641 562 645 576 646.300H1126" fill="none" stroke="#666" strokeWidth="2.400" />
    <path d="M1125 646.300H1258" stroke="#7ff6f8" strokeWidth="3" />
    <AxisText x="875" y="708" textAnchor="middle" $size={19} $ls={-0.100}>LTWBBudykoComposite</AxisText>
    <AxisText transform="translate(371.500 538) rotate(-90)" textAnchor="middle" $size={18.600} $ls={0.100}>Count</AxisText>
    {legend.map(([t, c], i) => (
      <g key={t}>
        <path d={`M1281 ${513.500 + i * 32}h13`} stroke={c} strokeWidth="1.500" />
        <AxisText x="1299" y={520 + i * 32.200} $size={16.200} $ls={-0.180}>{t}</AxisText>
      </g>
    ))}
  </svg>
);

/* ---------- data ---------- */

const ribbon: [string, number][] = [["Project", 95], ["Map", 79], ["Insert", 79], ["Analysis", 102], ["View", 79], ["Edit", 59], ["Imagery", 112], ["Share", 71]];

const rasters = ["LTWBTurcNeutral.tif", "LTWBTurcNino.tif", "LTWBTurcNina.tif", "LTWBTurcComposite.tif", "LTWBDekopNeutral.tif", "LTWBDekopNino.tif", "LTWBDekopNina.tif", "LTWBDekopComposite.tif", "LTWBBudykoNeutral.tif", "LTWBBudykoNino.tif", "LTWBBudykoNina.tif", "LTWBBudykoComposite.tif", "RunoffPTurcNeutral.tif", "RunoffPTurcNino.tif", "RunoffPTurcNina.tif"];

const columns = ["FROM_NODE", "TO_NODE", "ORIG_FID", "CX", "CY", "ALOSFac", "Akm2", "LTWBBudykoComposite", "LTWBBudykoNeutral", "LTWB"];
const records = [
  ["28910", "28897", "32590", "4858970.95458", "2540748.19013", "6401", "1.000156", "0.024434", "0.023671", ""],
  ["29717", "29834", "33615", "4869520.95458", "2534473.19013", "6401", "1.000156", "0.025587", "0.024839", ""],
  ["29888", "30038", "33919", "4864083.45458", "2532285.69013", "6401", "1.000156", "0.024743", "0.023781", ""],
  ["30575", "30741", "34642", "4863995.95458", "2527773.19013", "6401", "1.000156", "0.024096", "0.022878", ""],
];

const stats: [string, string, string?][] = [["Mean", "1.5", "#4f8fe8"], ["Median", "0.05", "#a349c4"], ["Std. Dev.", "10.4", "#b5b5b5"], ["Rows", "32,078"], ["Count", "32,078"], ["Nulls", "0"], ["Min", "0.0028"], ["Max", "311.5"], ["Sum", "47,903.9"], ["Skewness", "17.7"], ["Kurtosis", "418.9"]];

const Expanded = () => <svg width="9" height="9" viewBox="0 0 9 9"><path d="M8.500 0v8.500H0z" fill="#5c5c5c" /></svg>;
const Collapsed = () => <svg width="7" height="11" viewBox="0 0 7 11"><path d="M.6 1v9l5.500-4.500z" fill="#fff" stroke="#8a8a8a" /></svg>;

/* ---------- sections ---------- */

const Contents = () => (
  <Panel $w={334} $h={932}>
    <PanelHeader>
      Contents
      <PanelButtons><Chevron s={10} /><Pin /><Close s={12} /></PanelButtons>
    </PanelHeader>
    <SearchRow>
      <Funnel />
      <SearchBox><span>Search</span><Magnifier /><Gap $w={13} /><Chevron s={10} w={1.300} /></SearchBox>
    </SearchRow>
    <ListModes>
      <ModeStrip>
        <Mode $w={40} $active><DrawingOrderIcon /></Mode>
        <Mode $w={39}><SourceIcon /></Mode>
        <Mode $w={41}><SelectionIcon /></Mode>
        <Mode $w={40}><PencilIcon /></Mode>
        <Mode $w={41}><SnapIcon /></Mode>
        <Mode $w={39}><TagIcon /></Mode>
        <Mode $w={15}><PerspectiveIcon /></Mode>
      </ModeStrip>
      <MoreDots><i /><i /><i /></MoreDots>
    </ListModes>
    <SectionTitle $h={36} $top={7} $pad={19} $size={17.400}>Drawing Order</SectionTitle>
    <TreeArea>
      <Tree>
        <TreeRow $pad={2}><Toggle $w={14}><Expanded /></Toggle><MapIcon s={20} /><RowBody $indent={6}>Map</RowBody></TreeRow>
        <TreeRow $pad={16}>
          <Toggle $w={13}><Expanded /></Toggle>
          <RowBody><CheckBox><Check /></CheckBox>ALOSStrNodeGDB</RowBody>
        </TreeRow>
        <TreeRow $pad={36} $h={22} $top={1}><Dot $size={10} /></TreeRow>
        <TreeRow $pad={45} $top={5}><b>Charts</b></TreeRow>
        <TreeRow $pad={45}><Histogram s={19} /><RowBody $indent={12}>Distribution of LTWBBudykoComposite</RowBody></TreeRow>
        <TreeRow $pad={16}>
          <Toggle $w={13}><Expanded /></Toggle>
          <RowBody><CheckBox />ALOSStrNode</RowBody>
        </TreeRow>
        <TreeRow $pad={36} $h={22}><Dot $size={13.500} /></TreeRow>
        <TreeRow $pad={16} $top={6}>
          <Toggle $w={13}><Expanded /></Toggle>
          <RowBody><CheckBox><Check /></CheckBox>alosstr</RowBody>
        </TreeRow>
        <TreeRow $pad={37} $h={26}><LineSample $w={22} $color="#4a7fc8" /></TreeRow>
        <TreeRow $pad={29} $top={4}><RowBody><CheckBox />Graphics Layer</RowBody></TreeRow>
        {rasters.map((name) => (
          <TreeRow key={name} $pad={19}>
            <Toggle $w={10}><Collapsed /></Toggle>
            <RowBody $selected={name === "LTWBBudykoComposite.tif"}><CheckBox />{name}</RowBody>
          </TreeRow>
        ))}
      </Tree>
      <VScroll $w={21}>
        <svg width="10" height="22" viewBox="0 0 10 22" fill="none" stroke="#666" strokeWidth="1.500"><path d="M1 12.500l4-4.200 4 4.200" /></svg>
        <Thumb $w={11} $h={317} />
        <Spacer />
        <Chevron s={10} w={1.600} />
        <svg width="1" height="5" />
      </VScroll>
    </TreeArea>
    <HScroll $w={310} $h={21} $pad="0 5px">
      <Chevron s={10} dir={90} w={1.600} />
      <Thumb $w={242} $h={11} $m="0 0 0 6px" />
      <Spacer />
      <Chevron s={10} dir={-90} w={1.600} />
    </HScroll>
  </Panel>
);

const MapView = () => (
  <>
    <DocTabs>
      <DocTab $w={94}><MapIcon s={20} />Map<Close s={12} /></DocTab>
      <DocChevron><Chevron s={11} w={1.600} /></DocChevron>
    </DocTabs>
    <DocBody $h={184} $plain>
      <StreamMap />
      <Bar $h={31} $size={14.500}>
        <ScaleBox>1:232,186<Caret /></ScaleBox>
        <Divider $l={4} $r={7} />
        <Centered $w={26} $h={26} $tint="#9fd3f3">
          <svg width="20" height="20" viewBox="0 0 20 20" fill="none" stroke="#6f6f6f" strokeWidth="1.200"><path d="M1 1h12v8M1 1v13h7M7 1v13M1 7h12M14.500 10v9M10 14.500h9" /></svg>
        </Centered>
        <Centered $w={28}>
          <svg width="17" height="17" viewBox="0 0 17 17" fill="none" stroke="#8c8c8c"><path d="M.5.5h16v16H.5zM.5 4.500h16M.5 8.500h16M.5 12.500h16M4.500.5v16M8.500.5v16M12.500.5v16" /></svg>
        </Centered>
        <Centered $w={30}>
          <svg width="21" height="20" viewBox="0 0 21 20" fill="none" stroke="#777"><path d="M1 2h5v3H1zM14 10h5v4h-5zM13 3h6M16 .5v5" /><path d="M3 12L14 4M4 12V8" stroke="#3f95d2" strokeDasharray="3 2" /><path d="M4 17l8-4 1 3h7v2H4z" fill="#9fd3f3" stroke="none" /><path d="M0 15h4v4H0z" fill="#4f9a5a" stroke="none" /></svg>
        </Centered>
        <Centered $w={26}>
          <svg width="20" height="20" viewBox="0 0 20 20" fill="none"><path d="M0 0h10v10H0z" fill="#d9efd2" /><path d="M10 0v7M10 13v7M0 10h7M13 10h7" stroke="#666" strokeWidth="1.300" strokeDasharray="2 1" /><path d="M8 8h4v4H8z" stroke="#555" /></svg>
        </Centered>
        <Centered $w={30}>
          <svg width="21" height="20" viewBox="0 0 21 20" fill="none"><path d="M1.500 15V5l6 10V5" stroke="#3f95d2" strokeWidth="2.200" /><path d="M11 0v20M20 9l-9 10" stroke="#777" /><path d="M13 2c3 0 4 2 4 6M14.500 6l2.500 2.500L19.500 6" stroke="#3f95d2" strokeWidth="1.300" /></svg>
        </Centered>
        <Divider $l={4} $r={162} />
        <Slot $w={213}>4,946,905.44E 2,643,916.19N m</Slot>
        <Chevron s={13} w={2.400} />
        <Divider $l={164} $r={8} />
        <Slot $w={165} $icon={5}><ZoomFeatures />Selected Features: 1</Slot>
        <Divider $l={0} $r={9} />
        <svg width="14" height="18" viewBox="0 0 14 18"><path d="M0 0h5v18H0zM9 0h5v18H9z" fill="#6e6e6e" /></svg>
        <Divider $l={12} $r={7} />
        <Refresh />
      </Bar>
    </DocBody>
  </>
);

const ChartView = () => (
  <>
    <DocTabs $top={8}>
      <DocTab $w={319}><Histogram />ALOSStrNodeGDB - Dis...BudykoCom...<Close s={12} /></DocTab>
      <DocChevron><Chevron s={11} w={1.600} /></DocChevron>
    </DocTabs>
    <DocBody $h={378}>
      <Bar $h={40} $tone="#eeeff1" $size={15} $left={10}>
        <Slot $w={104} $icon={2} $color="#333">
          <svg width="19" height="20" viewBox="0 0 19 20" fill="#fff" stroke="#777"><path d="M1 1h15v18H1z" /><path d="M3 4h3M3 7h3M3 10h3M3 13h3M3 16h3" stroke="#4a9fd6" strokeWidth="1.300" strokeDasharray="1.500 1" /><path d="M7 4h11.500v9H13l-3 3v-3H7z" /><path d="M9 6.500h8M9 8.500h8M9 10.500h8" /></svg>
          Properties
        </Slot>
        <Slot $w={72} $icon={3} $color="#111">
          <svg width="19" height="20" viewBox="0 0 19 20"><path d="M.6 0v19.400H10" fill="none" stroke="#777" strokeWidth="1.200" /><path d="M3 9h3v9H3z" fill="#ecd352" /><path d="M7 1h2.500v17H7z" fill="#58aee2" /><path d="M11 4h2.500v10H11z" fill="#cf6a4c" /><path d="M15 10h2v4h-2z" fill="#6bab6b" /><path d="M11 16h6M14.500 13l3.500 3-3.500 3" fill="none" stroke="#4f9a5a" strokeWidth="1.800" /></svg>
          Export
        </Slot>
        <Slot $w={16}><Caret /></Slot>
        <Divider $l={0} $r={7} $h={33} $w={2} />
        <Slot $w={48} $bold>Filter:</Slot>
        <Slot $w={98} $icon={2}>
          <svg width="20" height="20" viewBox="0 0 20 20"><path d="M.7.7h14.600v2L10 8.500V15l-4 4V8.500L.7 2.700z" fill="#a5a5a5" stroke="#6c6c6c" /><path d="M10.500 10h9v9h-9z" fill="#b5e6f7" stroke="#666" /><path d="M13 10l2 4 4-1" fill="none" stroke="#666" /></svg>
          Selection
        </Slot>
        <Slot $w={79} $icon={2}>
          <svg width="20" height="20" viewBox="0 0 20 20"><path d="M.7.7h14.600v2L10 8.500V15l-4 4V8.500L.7 2.700z" fill="#a5a5a5" stroke="#6c6c6c" /><path d="M9.500 7.500h10v12h-10z" fill="#eeeff1" /><path d="M11 9h8.500v9H11zM11 13.500h8" fill="none" stroke="#4a9fd6" strokeWidth="1.600" strokeDasharray="2.500 1.500" /></svg>
          Extent
        </Slot>
        <Divider $l={0} $r={10} $h={33} $w={2} />
        <Slot $w={138} $icon={3} $color="#333"><TableIcon />Attribute Table</Slot>
        <Slot $w={148} $icon={2} $color="#333">
          <svg width="20" height="20" viewBox="0 0 20 20" fill="#fff" stroke="#6a6a6a"><path d="M1 1h14v12H1z" /><path d="M1.500 1.500h5L9 12H1.500z" fill="#b5e6f7" stroke="none" /><path d="M7 7h12v12H7z" /><path d="M13 7l3 5-1 7h4V7z" fill="#b5e6f7" /><path d="M9 9l4 4 3-3M15 1c3 0 3 2 3 5M1 14c0 4 2 5 5 5M0 16l1.500-2.500L4 16" fill="none" /></svg>
          Switch Selection
        </Slot>
        <Slot $w={136} $icon={4} $color="#b2b4b5"><SelectionIcon s={16} fill="#f4f5f6" c="#c4c6c8" />Clear Selection</Slot>
        <Divider $l={0} $r={9} $h={33} $w={2} />
        <Slot $w={113} $icon={2} $color="#b2b4b5" $tint="#f1f3f4">
          <svg width="20" height="20" viewBox="0 0 20 20" fill="none"><path d="M.6 0v19.400H20" stroke="#bcbec0" /><path d="M3 4c5 0 8 3 8.500 11M7.500 11.500l4 4 3.500-4" stroke="#a9cfe6" strokeWidth="1.600" /></svg>
          Rotate Chart
        </Slot>
        <Divider $l={9} $r={17} $h={33} $w={2} />
        <Slot $w={12}><svg width="8" height="24" viewBox="0 0 8 24" fill="none" stroke="#333" strokeWidth="1.400"><path d="M0 17h8M1 19.500l3 3 3-3" /></svg></Slot>
        <Centered $w={27} $h={29} $tint="#9bdaff">
          <svg width="17" height="20" viewBox="0 0 17 20" fill="none" strokeWidth="1.300"><path d="M7 2.500h10M7 7.500h10M7 12.500h10M7 17.500h10" stroke="#3f95d2" /><path d="M1 1h3v3H1z" stroke="#3f95d2" /><circle cx="2.500" cy="7.500" r="1.500" stroke="#5f9d4a" /><path d="M1 11h3v3H1z" stroke="#cf5a3c" /><circle cx="2.500" cy="17.500" r="1.500" stroke="#9a6fc0" /></svg>
        </Centered>
        <Centered $w={20} $h={32}><Chevron s={7} w={2} /></Centered>
      </Bar>
      <DistributionChart />
    </DocBody>
  </>
);

const TableView = () => (
  <>
    <DocTabs $top={8}>
      <DocTab $w={184}><TableIcon />ALOSStrNodeGDB<Close s={12} /></DocTab>
      <DocChevron><Chevron s={11} w={1.600} /></DocChevron>
    </DocTabs>
    <DocBody $h={261} $plain>
      <Bar $h={37} $tone="#eeeff1" $size={14.700} $left={8}>
        <Slot $w={46} $bold>Field:</Slot>
        <Slot $w={64} $icon={5}><FieldIcon plus />Add</Slot>
        <Slot $w={98} $icon={5}><FieldIcon />Calculate</Slot>
        <Divider $l={0} $r={9} $h={28} />
        <Slot $w={76} $bold>Selection:</Slot>
        <Slot $w={166} $icon={4}>
          <svg width="20" height="20" viewBox="0 0 20 20" fill="none" stroke="#6a6a6a"><path d="M1 1h11v11H1z" fill="#fff" /><path d="M1 1h5v11H1z" fill="#b5e6f7" stroke="none" /><path d="M4 1l4 5 3-3" /><path d="M8 8h11.500v11.500H8z" fill="#fff" /><path d="M8.500 8.500H19v3H8.500z" fill="#62ace0" stroke="none" /><path d="M8 12h11.500M8 15h11.500M12 12v7M16 12v7" /></svg>
          Select By Attributes
        </Slot>
        <Slot $w={96} $icon={4}><ZoomSelected />Zoom To</Slot>
        <Slot $w={78} $icon={4}><RowsIcon kind="switch" />Switch</Slot>
        <Slot $w={70} $icon={6}><RowsIcon kind="clear" />Clear</Slot>
        <Slot $w={80} $icon={6}><RowsIcon kind="delete" />Delete</Slot>
        <Slot $w={264} $icon={4}><RowsIcon kind="copy" />Copy</Slot>
        <svg width="18" height="17" viewBox="0 0 18 17"><path d="M0 1.800h18M0 8.200h18M0 14.700h18" stroke="#555" strokeWidth="3.500" /></svg>
      </Bar>
      <TableFrame>
        <TableMain>
          <Grid>
            <GridRow $head>
              <Corner><svg width="13" height="14" viewBox="0 0 13 14"><path d="M13 0v14H0z" fill="#c9c9c9" /></svg></Corner>
              {columns.map((c, i) => (
                <Cell key={c} $head $left={i === 3 || i === 4 || i === 6 || i === 9} $hot={i === 7}>
                  {c}
                  {c === "Akm2" && <><Spacer /><svg width="10" height="7" viewBox="0 0 10 7"><path d="M5 0l5 7H0z" fill="#444" /></svg></>}
                </Cell>
              ))}
            </GridRow>
            {records.map((r, n) => (
              <GridRow key={n} $odd={n % 2 === 0}>
                <RowHead $current={n === 0}>{n + 1}</RowHead>
                {r.map((v, i) => <Cell key={i} $hot={n === 0 && i === 7}>{v}</Cell>)}
              </GridRow>
            ))}
          </Grid>
          <VScroll $w={24}>
            <svg width="10" height="27" viewBox="0 0 10 27" fill="none" stroke="#777" strokeWidth="1.300"><path d="M1.500 15L5 10.500l3.500 4.500" /></svg>
            <Thumb $w={12} $h={29} />
            <Spacer />
            <Chevron s={10} w={1.400} c="#666" />
            <svg width="1" height="7" />
          </VScroll>
        </TableMain>
        <HScroll $w={1082} $h={23} $pad="0 32px 0 7px">
          <Chevron s={9} dir={90} />
          <Thumb $w={301} $h={12} $m="0 0 0 174px" />
          <Spacer />
          <Chevron s={9} dir={-90} />
        </HScroll>
      </TableFrame>
      <Bar $h={34} $left={1}>
        <ViewToggle>
          <svg width="20" height="18" viewBox="0 0 20 18" fill="none" stroke="#555"><path d="M.5.5h19v17H.5z" fill="#fff" /><path d="M1 5h18v4H1zM1 13h18v4H1z" fill="#b5e6f7" stroke="none" /><path d="M.5 4.700h19M.5 9h19M.5 13.300h19" /></svg>
        </ViewToggle>
        <Centered $w={42} $h={30}>
          <svg width="19" height="14" viewBox="0 0 19 14" fill="#b5e6f7" stroke="#555"><path d="M.5.500h18v13H.5zM.5 5h18M.5 9h18" /></svg>
        </Centered>
        <Centered $w={34}><svg width="12" height="12" viewBox="0 0 12 12" fill="#bdbfc0"><path d="M0 0h1.500v12H0zM12 0v12L3 6z" /></svg></Centered>
        <Centered $w={22}><svg width="12" height="12" viewBox="0 0 12 12" fill="#444"><path d="M10.500 0H12v12h-1.500zM0 0l9 6-9 6z" /></svg></Centered>
        <Gap $w={11} />
        <Slot $w={478}>1 of 32,078 selected</Slot>
        <Slot $w={48}>Filters:</Slot>
        <Slot $w={52} $h={30} $icon={7} $tint="#eeeff1">
          <Gap $w={4} />
          <svg width="19" height="20" viewBox="0 0 19 20" fill="none" stroke="#c9dcdc"><circle cx="9.500" cy="10" r="8.500" fill="#eef3f1" /><circle cx="9.500" cy="10" r="6" fill="#e0eadf" /><path d="M9.500 5v5.500h4" stroke="#9aa" /></svg>
          <svg width="19" height="20" viewBox="0 0 19 20" fill="none" stroke="#c9dcdc"><path d="M17 7a8.500 8.500 0 1 1-15 2" fill="#e0eadf" /><path d="M2 0v8M6 0v8M10 0v8M.5 3h3M4.500 5h3M8.500 3h3" stroke="#c2c8ca" /></svg>
        </Slot>
        <Slot $w={28}>
          <Gap $w={4} />
          <svg width="21" height="20" viewBox="0 0 21 20"><path d="M.7.700h15.600v2L11 8.500V18l-4 1.300V8.500L.7 2.700z" fill="#a5a5a5" stroke="#6c6c6c" /><path d="M9.500 8h11v12h-11z" fill="#f7f9f8" /><path d="M11 9h9M11 13h9M11 17h9M11.500 9v9M15.500 9v9M19.500 9v9" fill="none" stroke="#4a9fd6" strokeWidth="1.800" strokeDasharray="2 1.500" /></svg>
        </Slot>
        <Divider $l={0} $r={6} $h={19} />
        <svg width="13" height="19" viewBox="0 0 13 19" fill="none" strokeWidth="2.600"><path d="M6.500 2v8M1.500 6.500l5-5 5 5" stroke="#4f9a5a" /><path d="M6.500 9v8M1.500 12.500l5 5 5-5" stroke="#e79a3c" /></svg>
        <Gap $w={7} />
        <Centered $w={29}><svg width="7" height="2"><path d="M0 1h7" stroke="#444" strokeWidth="2" /></svg></Centered>
        <Track $w={125} $pos={63}><i /><i /><i /></Track>
        <Centered $w={28}><svg width="10" height="10" viewBox="0 0 10 10"><path d="M0 5h10M5 0v10" stroke="#444" strokeWidth="2" /></svg></Centered>
        <Slot $w={74} $color="#111" $tint="#fff"><Gap $w={7} />110%<Spacer /><Caret /><Gap $w={5} /></Slot>
        <Divider $l={6} $r={10} $h={19} />
        <Refresh />
      </Bar>
    </DocBody>
  </>
);

const ChartProperties = () => (
  <RightColumn>
    <Panel $w={468} $h={907}>
      <PanelHeader>
        Chart Properties - ALOSStrNodeGDB
        <PanelButtons><Chevron s={10} /><Pin /><Close s={12} /></PanelButtons>
      </PanelHeader>
      <ChartName><Histogram s={28} />Distribution of LTWBBudykoComposite</ChartName>
      <PropTabs>
        <PropTab $w={45} $active><span>Data</span></PropTab>
        <PropTab $w={44}><span>Axes</span></PropTab>
        <PropTab $w={60}><span>Guides</span></PropTab>
        <PropTab $w={62}><span>Format</span></PropTab>
        <PropTab $w={60}><span>General</span></PropTab>
        <svg width="21" height="21" viewBox="0 0 21 21" fill="none"><circle cx="10.500" cy="10.500" r="9.700" fill="#e3f1fa" stroke="#5aa9dc" strokeWidth="1.300" /><path d="M7.500 8c0-4 6-4 6-.5 0 2.300-3 2.300-3 5" stroke="#4a9fd6" strokeWidth="1.800" /><circle cx="10.500" cy="15.500" r="1.200" fill="#4a9fd6" /></svg>
      </PropTabs>
      <Form>
        <SectionTitle $h={26}>Variable</SectionTitle>
        <FieldLabel $h={32}>Number</FieldLabel>
        <Select>LTWBBudykoComposite<Chevron s={8} w={2} /></Select>
        <FieldLabel $h={36}>With transformation</FieldLabel>
        <Select>None<Chevron s={8} w={2} /></Select>
        <CheckRow $h={44}><CheckBox $square><Check /></CheckBox>Show Normal distribution<Gap $w={0} /><LineSample $w={19} $h={3} $color="#9a9a9a" /></CheckRow>
        <BinsRow>
          <span>Bins</span>
          <svg width="19" height="19" viewBox="0 0 19 19" fill="none"><circle cx="9.500" cy="9.500" r="8.500" stroke="#007ac2" strokeWidth="1.300" /><path d="M7.500 8h2.500v5.500M7 13.500h5" stroke="#007ac2" strokeWidth="1.600" /><circle cx="9.500" cy="5" r="1.200" fill="#007ac2" /></svg>
          <Swatch />
        </BinsRow>
        <SliderRow>
          <Track $w={112} $pos={10}><i /><i /><i /></Track>
          <Spinner>6<div><Chevron s={11} w={1.400} dir={180} c="#888" /><Chevron s={11} w={1.400} c="#888" /></div></Spinner>
        </SliderRow>
        <SectionTitle $h={38}>Statistics</SectionTitle>
        <StatRow $h={20}><span /><span /><span />Dataset</StatRow>
        {stats.map(([name, value, color]) => (
          <StatRow key={name}>
            {color ? <CheckBox $square><Check /></CheckBox> : <span />}
            <b>{name}</b>
            {color ? <LineSample $w={20} $color={color} /> : <span />}
            <span>{value}</span>
          </StatRow>
        ))}
        <SectionTitle $h={38} $top={15}>Data Labels</SectionTitle>
        <CheckRow $h={18} $dark><CheckBox $square><Check /></CheckBox>Label bins</CheckRow>
      </Form>
    </Panel>
    <BottomTabs>
      <BottomTab $w={68}>Catalog</BottomTab>
      <BottomTab $w={120} $active>Chart Properties</BottomTab>
      <BottomTab $w={115}>Geoprocessing</BottomTab>
      <BottomTab $w={92}>Symbology</BottomTab>
    </BottomTabs>
  </RightColumn>
);

export default function App() {
  return (
    <Window>
      <GlobalStyle />
      <TitleBar>
        <QuickAccess>
          <ProjectIcon kind="new" /><Gap $w={13} /><ProjectIcon kind="open" /><Gap $w={14} /><ProjectIcon kind="save" />
          <Gap $w={11} /><Undo />
          <ButtonCell $w={28}><Chevron s={8} w={2} /></ButtonCell>
          <Undo flip />
          <ButtonCell $w={28}><Chevron s={8} w={2} /></ButtonCell>
          <Gap $w={2} />
          <ButtonCell $w={30}><svg width="10" height="11" viewBox="0 0 10 11" fill="none" stroke="#444" strokeWidth="1.500"><path d="M0 1h10M1 5.500l4 4 4-4" /></svg></ButtonCell>
        </QuickAccess>
        <ProjectName>ArcGISProSection05</ProjectName>
        <CommandSearch><Magnifier />Command Search (Alt+Q)</CommandSearch>
        <WindowButtons>
          <ButtonCell $w={42}>
            <svg width="17" height="19" viewBox="0 0 17 19" fill="none" stroke="#555" strokeWidth="1.300"><path d="M.8 15.500h15.400c-1.500-1-2.200-2-2.200-4V8c0-7-11-7-11 0v3.500c0 2-.7 3-2.200 4M7 17.800h3M8.500.5V2" /></svg>
          </ButtonCell>
          <ButtonCell $w={56}>?</ButtonCell>
          <ButtonCell $w={54}><svg width="13" height="2"><path d="M0 1h13" stroke="#555" strokeWidth="1.300" /></svg></ButtonCell>
          <ButtonCell $w={56}><svg width="13" height="13" viewBox="0 0 13 13" fill="none" stroke="#555"><path d="M.6 3.500h9v9h-9zM3.500 3.500V.6h9v9h-3" /></svg></ButtonCell>
          <ButtonCell $w={54}><Close s={13} w={1.100} /></ButtonCell>
        </WindowButtons>
      </TitleBar>
      <RibbonTabs>
        {ribbon.map(([name, w]) => <RibbonTab key={name} $w={w}>{name}</RibbonTab>)}
        <ContextGroup $gap={31}><RibbonTab $w={131}>Raster Layer</RibbonTab><RibbonTab $w={74}>Data</RibbonTab></ContextGroup>
        <ContextGroup $gap={25}><RibbonTab $w={79}>Chart</RibbonTab></ContextGroup>
      </RibbonTabs>
      <Workspace>
        <Contents />
        <Center>
          <MapView />
          <ChartView />
          <TableView />
        </Center>
        <ChartProperties />
      </Workspace>
      <TaskStrip />
    </Window>
  );
}
